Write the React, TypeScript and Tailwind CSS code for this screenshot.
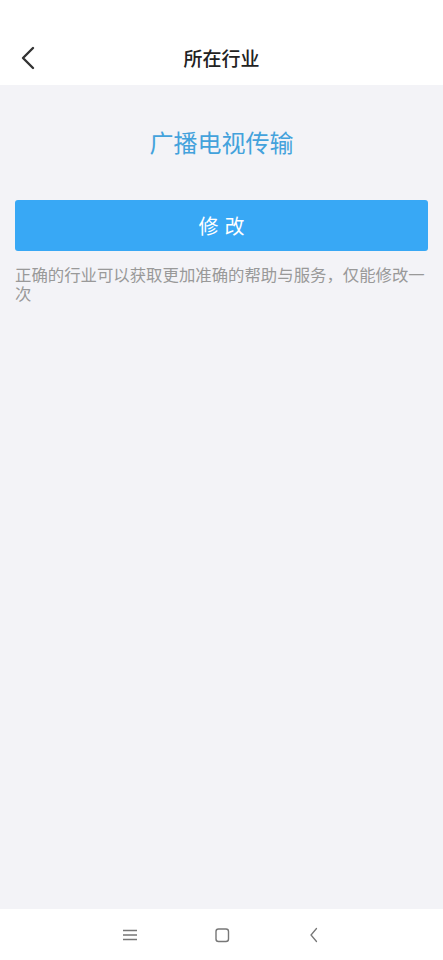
const font = { fontFamily: '"Noto Sans CJK SC", "Noto Sans", sans-serif' };

const App = () => {
  return (
    <div className="w-[443px] h-[960px] flex flex-col bg-[#f3f3f7]" style={font}>
      {/* header */}
      <div className="h-[85px] bg-white flex items-end pb-[9px] relative">
        <div className="w-full flex items-center justify-center h-[36px]">
          <span className="text-[19px] font-medium text-[#222]">所在行业</span>
        </div>
        <svg
          className="absolute left-[19px] top-[45px]"
          width="18"
          height="26"
          viewBox="0 0 18 26"
          fill="none"
          stroke="#333"
          strokeWidth="2.4"
          strokeLinecap="round"
          strokeLinejoin="round"
        >
          <path d="M14 3 L4 13 L14 23" />
        </svg>
      </div>

      {/* content */}
      <div className="flex-1 flex flex-col px-[15px]">
        <div className="mt-[38px] h-[38px] flex items-center justify-center">
          <span className="text-[24px] text-[#43a2dc]">广播电视传输</span>
        </div>
        <button className="mt-[39px] h-[51px] w-full rounded-[3px] bg-[#38a8f5] flex items-center justify-center">
          <span className="text-white text-[20px] tracking-[6px] pl-[6px]">修改</span>
        </button>
        <p className="mt-[14px] text-[16.4px] leading-[19px] text-[#999]">
          正确的行业可以获取更加准确的帮助与服务，仅能修改一次
        </p>
      </div>

      {/* system nav */}
      <div className="h-[51px] bg-white flex items-center justify-center gap-[72px]">
        <svg width="20" height="20" viewBox="0 0 20 20" stroke="#777" strokeWidth="1.3" fill="none">
          <path d="M3 5.5 H17 M3 10 H17 M3 14.5 H17" />
        </svg>
        <svg width="20" height="20" viewBox="0 0 20 20" stroke="#777" strokeWidth="1.4" fill="none">
          <rect x="4" y="4" width="12.5" height="12.5" rx="2.5" />
        </svg>
        <svg width="20" height="20" viewBox="0 0 20 20" stroke="#777" strokeWidth="1.3" fill="none" strokeLinecap="round">
          <path d="M12.5 3.5 L7 10 L12.5 16.5" />
        </svg>
      </div>
    </div>
  );
};

export default App;
